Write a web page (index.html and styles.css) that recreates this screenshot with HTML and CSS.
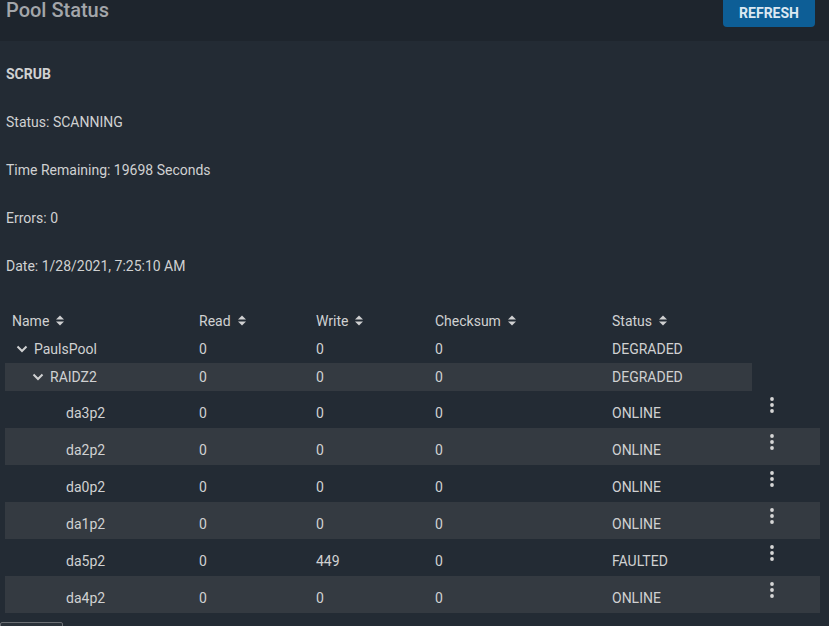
FILE: index.html
```html
<!DOCTYPE html>
<html lang="en">
<head>
    <meta charset="UTF-8">
    <title>Pool Status</title>
    <link rel="stylesheet" href="styles.css">
</head>
<body>
    <header class="page-header">
        <h1 class="page-title">Pool Status</h1>
        <button class="refresh-btn">REFRESH</button>
    </header>

    <section class="scrub-info">
        <p class="scrub-title">SCRUB</p>
        <p>Status: SCANNING</p>
        <p>Time Remaining: 19698 Seconds</p>
        <p>Errors: 0</p>
        <p>Date: 1/28/2021, 7:25:10 AM</p>
    </section>

    <div class="table-wrap">
        <table class="pool-table">
            <colgroup>
                <col style="width:187px">
                <col style="width:117px">
                <col style="width:119px">
                <col style="width:177px">
                <col style="width:147px">
                <col style="width:68px">
            </colgroup>
            <thead>
                <tr>
                    <th><span class="th-label">Name <svg class="sort-icon" viewBox="0 0 8 11"><polygon points="0,4.5 4,0.5 8,4.5"/><polygon points="0,6.5 4,10.5 8,6.5"/></svg></span></th>
                    <th><span class="th-label">Read <svg class="sort-icon" viewBox="0 0 8 11"><polygon points="0,4.5 4,0.5 8,4.5"/><polygon points="0,6.5 4,10.5 8,6.5"/></svg></span></th>
                    <th><span class="th-label">Write <svg class="sort-icon" viewBox="0 0 8 11"><polygon points="0,4.5 4,0.5 8,4.5"/><polygon points="0,6.5 4,10.5 8,6.5"/></svg></span></th>
                    <th><span class="th-label">Checksum <svg class="sort-icon" viewBox="0 0 8 11"><polygon points="0,4.5 4,0.5 8,4.5"/><polygon points="0,6.5 4,10.5 8,6.5"/></svg></span></th>
                    <th><span class="th-label">Status <svg class="sort-icon" viewBox="0 0 8 11"><polygon points="0,4.5 4,0.5 8,4.5"/><polygon points="0,6.5 4,10.5 8,6.5"/></svg></span></th>
                    <th></th>
                </tr>
            </thead>
            <tbody>
                <tr class="tree-row">
                    <td><div class="name-cell level-0"><svg class="chevron" viewBox="0 0 12 8"><path d="M1.5 1.5 L6 6 L10.5 1.5"/></svg>PaulsPool</div></td>
                    <td>0</td>
                    <td>0</td>
                    <td>0</td>
                    <td>DEGRADED</td>
                </tr>
                <tr class="tree-row">
                    <td><div class="name-cell level-1"><svg class="chevron" viewBox="0 0 12 8"><path d="M1.5 1.5 L6 6 L10.5 1.5"/></svg>RAIDZ2</div></td>
                    <td>0</td>
                    <td>0</td>
                    <td>0</td>
                    <td>DEGRADED</td>
                </tr>
                <tr class="disk-row">
                    <td><div class="name-cell level-2">da3p2</div></td>
                    <td>0</td>
                    <td>0</td>
                    <td>0</td>
                    <td>ONLINE</td>
                    <td class="actions"><svg class="kebab" viewBox="0 0 24 24"><circle cx="12" cy="6" r="1.9"/><circle cx="12" cy="12" r="1.9"/><circle cx="12" cy="18" r="1.9"/></svg></td>
                </tr>
                <tr class="disk-row">
                    <td><div class="name-cell level-2">da2p2</div></td>
                    <td>0</td>
                    <td>0</td>
                    <td>0</td>
                    <td>ONLINE</td>
                    <td class="actions"><svg class="kebab" viewBox="0 0 24 24"><circle cx="12" cy="6" r="1.9"/><circle cx="12" cy="12" r="1.9"/><circle cx="12" cy="18" r="1.9"/></svg></td>
                </tr>
                <tr class="disk-row">
                    <td><div class="name-cell level-2">da0p2</div></td>
                    <td>0</td>
                    <td>0</td>
                    <td>0</td>
                    <td>ONLINE</td>
                    <td class="actions"><svg class="kebab" viewBox="0 0 24 24"><circle cx="12" cy="6" r="1.9"/><circle cx="12" cy="12" r="1.9"/><circle cx="12" cy="18" r="1.9"/></svg></td>
                </tr>
                <tr class="disk-row">
                    <td><div class="name-cell level-2">da1p2</div></td>
                    <td>0</td>
                    <td>0</td>
                    <td>0</td>
                    <td>ONLINE</td>
                    <td class="actions"><svg class="kebab" viewBox="0 0 24 24"><circle cx="12" cy="6" r="1.9"/><circle cx="12" cy="12" r="1.9"/><circle cx="12" cy="18" r="1.9"/></svg></td>
                </tr>
                <tr class="disk-row">
                    <td><div class="name-cell level-2">da5p2</div></td>
                    <td>0</td>
                    <td>449</td>
                    <td>0</td>
                    <td>FAULTED</td>
                    <td class="actions"><svg class="kebab" viewBox="0 0 24 24"><circle cx="12" cy="6" r="1.9"/><circle cx="12" cy="12" r="1.9"/><circle cx="12" cy="18" r="1.9"/></svg></td>
                </tr>
                <tr class="disk-row">
                    <td><div class="name-cell level-2">da4p2</div></td>
                    <td>0</td>
                    <td>0</td>
                    <td>0</td>
                    <td>ONLINE</td>
                    <td class="actions"><svg class="kebab" viewBox="0 0 24 24"><circle cx="12" cy="6" r="1.9"/><circle cx="12" cy="12" r="1.9"/><circle cx="12" cy="18" r="1.9"/></svg></td>
                </tr>
            </tbody>
        </table>
    </div>

    <div class="footer-box"></div>
</body>
</html>
```

FILE: styles.css
```css
:root {
    --header-bg: #1e252d;
    --page-bg: #232b34;
    --row-alt: #343a41;
    --text: #d0d1d2;
    --title: #a3a6aa;
    --accent: #0d5e96;
}

* {
    margin: 0;
    padding: 0;
    box-sizing: border-box;
}

body {
    background: var(--page-bg);
    color: var(--text);
    font-family: Roboto, 'Liberation Sans', sans-serif;
    font-size: 14px;
    line-height: 16px;
    overflow: hidden;
}

.page-header {
    background: var(--header-bg);
    height: 41px;
    display: flex;
    justify-content: space-between;
    align-items: flex-start;
    padding: 0 14px 0 6px;
}

.page-title {
    font-size: 20px;
    line-height: 20px;
    font-weight: 500;
    color: var(--title);
}

.refresh-btn {
    margin-top: -8px;
    height: 35px;
    padding: 8px 16px 0;
    border: none;
    border-radius: 4px;
    background: var(--accent);
    color: #dce8f2;
    font-family: Roboto, 'Liberation Sans', sans-serif;
    font-size: 14px;
    font-weight: 700;
    line-height: 19px;
    cursor: pointer;
}

.scrub-info {
    display: flex;
    flex-direction: column;
    gap: 32px;
    padding: 25px 0 0 6px;
}

.scrub-title {
    font-weight: 700;
}

.table-wrap {
    margin-top: 33px;
    padding: 0 9px 0 5px;
}

.pool-table {
    width: 815px;
    table-layout: fixed;
    border-collapse: collapse;
}

.pool-table th {
    text-align: left;
    font-weight: 400;
    height: 28px;
    padding: 0 7px 1px;
    vertical-align: middle;
}

.th-label {
    display: flex;
    align-items: center;
    gap: 7px;
    height: 16px;
}

.sort-icon {
    width: 8px;
    height: 11px;
    fill: var(--text);
}

.pool-table td {
    height: 28px;
    padding: 0 7px 1px;
    white-space: nowrap;
    vertical-align: middle;
}

.pool-table tbody tr:nth-child(even) td {
    background: var(--row-alt);
}

.disk-row td {
    height: 37px;
    padding: 6px 7px 0;
}

.disk-row td.actions {
    vertical-align: top;
    padding: 2px 0 0 8px;
}

.kebab {
    display: block;
    width: 24px;
    height: 24px;
    fill: #d6d6d6;
}

.name-cell {
    display: flex;
    align-items: center;
    gap: 6px;
    height: 16px;
}

.level-0 { margin-left: 4px; }
.level-1 { margin-left: 20px; }
.level-2 { margin-left: 54px; }

.chevron {
    width: 12px;
    height: 8px;
    fill: none;
    stroke: var(--text);
    stroke-width: 2;
}

.footer-box {
    margin-top: 9px;
    width: 63px;
    height: 30px;
    border: 1px solid #6b6f74;
    border-radius: 2px;
    background: #2a3139;
}
```
